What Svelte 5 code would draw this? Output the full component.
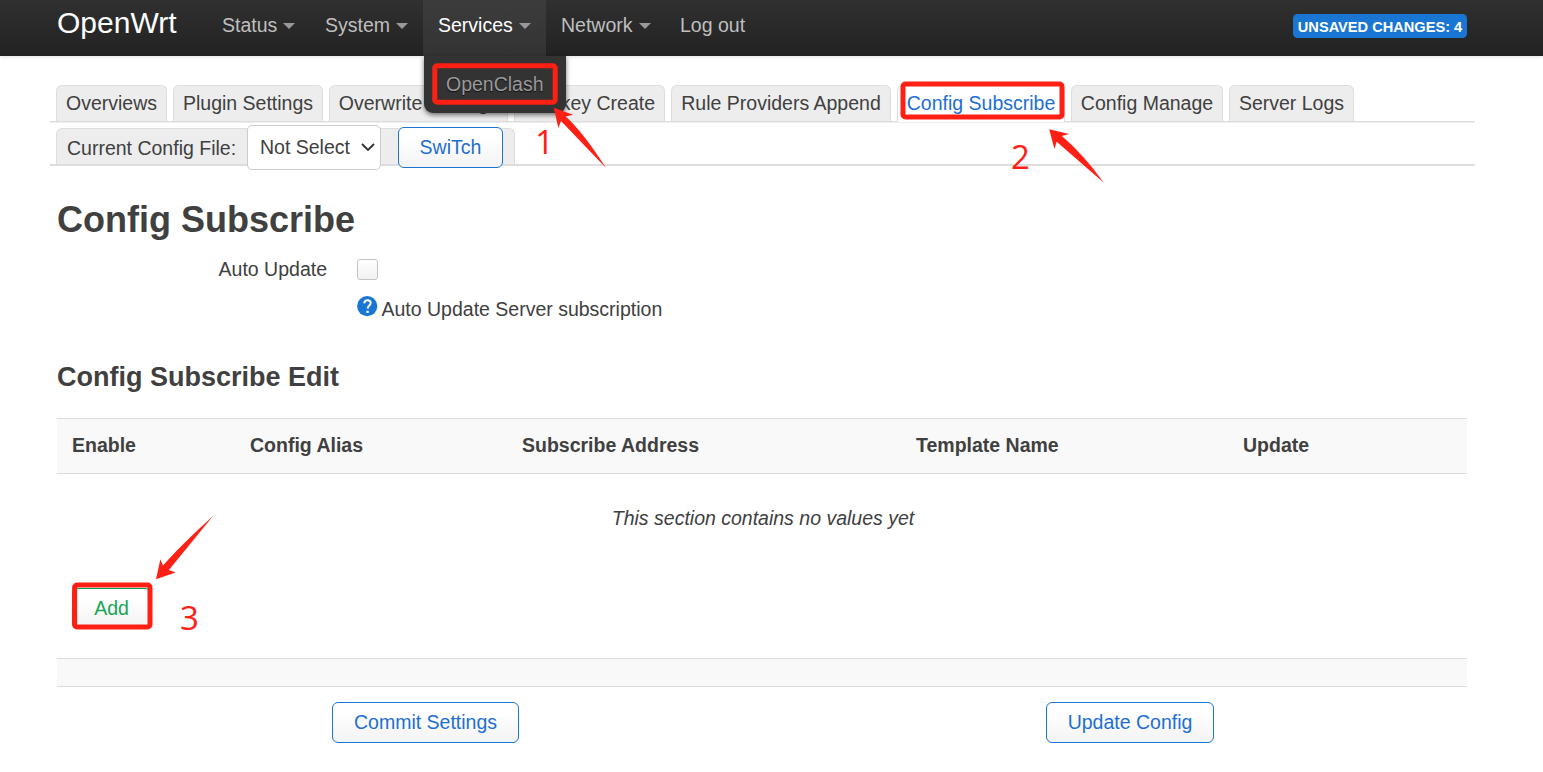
<script>
  const menus = [
    { label: 'Status', caret: true, w: 103 },
    { label: 'System', caret: true, w: 113 },
    { label: 'Services', caret: true, w: 123, open: true },
    { label: 'Network', caret: true, w: 119 },
    { label: 'Log out', caret: false, w: 95 }
  ];
  const tabs = [
    { label: 'Overviews', w: 111 },
    { label: 'Plugin Settings', w: 150 },
    { label: 'Overwrite Settings', w: 179 },
    { label: 'Onekey Create', w: 151 },
    { label: 'Rule Providers Append', w: 220 },
    { label: 'Config Subscribe', w: 168, active: true },
    { label: 'Config Manage', w: 152 },
    { label: 'Server Logs', w: 125 }
  ];
  const columns = ['Enable', 'Config Alias', 'Subscribe Address', 'Template Name', 'Update'];
</script>

<header>
  <a class="brand" href="#top">OpenWrt</a>
  <nav>
    {#each menus as m}
      <div class="menu" class:open={m.open} style:width="{m.w}px">
        <span>{m.label}</span>{#if m.caret}<i class="caret"></i>{/if}
        {#if m.open}<div class="dropdown"><span>OpenClash</span></div>{/if}
      </div>
    {/each}
  </nav>
  <span class="badge">UNSAVED CHANGES: 4</span>
</header>

<main>
  <div class="tabs">
    {#each tabs as t}
      <div class="tab" class:active={t.active} style:width="{t.w}px">{t.label}</div>
    {/each}
  </div>
  <div class="filebar">
    <div class="file">
      <span class="filelabel">Current Config File:</span>
      <div class="select">
        <span>Not Select</span>
        <svg width="16" height="10" viewBox="0 0 16 10"><path d="M2 2l6 6 6-6" fill="none" stroke="#333" stroke-width="1.9" /></svg>
      </div>
      <button class="switch">SwiTch</button>
    </div>
  </div>

  <h2>Config Subscribe</h2>
  <div class="option">
    <span class="optlabel">Auto Update</span>
    <div class="check"></div>
  </div>
  <div class="help">
    <svg width="21" height="21" viewBox="0 0 21 21">
      <circle cx="10.2" cy="10.2" r="10.1" fill="#1976d2" />
      <path d="M7.2 7.4C7.4 5.2 8.7 4.2 10.5 4.2c1.9 0 3.2 1.1 3.2 2.8 0 2.4-3 2.6-3.1 5.6" fill="none" stroke="#fff" stroke-width="1.9" />
      <rect x="9.4" y="14.8" width="2.3" height="2.2" fill="#fff" />
    </svg>
    <span>Auto Update Server subscription</span>
  </div>

  <h3>Config Subscribe Edit</h3>
  <div class="thead">
    {#each columns as c}<span>{c}</span>{/each}
  </div>
  <div class="empty"><em>This section contains no values yet</em></div>
  <div class="addrow"><button class="add">Add</button></div>
  <div class="strip"></div>
  <div class="actions">
    <button class="commit">Commit Settings</button>
    <button class="update">Update Config</button>
  </div>
</main>

<svg class="notes" width="1543" height="772" viewBox="0 0 1543 772">
  <g fill="none" stroke="#ff2015" stroke-width="5">
    <rect x="434.8" y="65.8" width="120.4" height="36.4" rx="2.5" />
    <rect x="903" y="84" width="159" height="33" rx="2.5" />
    <rect x="74.6" y="585" width="75.4" height="42" rx="2.5" />
  </g>
  <g fill="#ff2015">
    <path d="M553.7 107.7L573.2 114.7 565.7 116.5Q583 132 606 168L561 120.9 558.4 128Z" />
    <path d="M1049.2 129.2L1069 134 1061.9 136Q1084 155 1103.8 182.7L1056.7 141.7 1054.4 149Z" />
    <path d="M156 579.2L160.4 559.2 163 565.5Q181 545 213 516L168.9 570 175.5 572.4Z" />
    <text x="535" y="154">1</text>
    <text x="1011" y="169">2</text>
    <text x="180" y="630">3</text>
  </g>
</svg>

<style>
  :global(body) {
    background: #fff;
    color: #404040;
    font: 19.5px/27px "Liberation Sans", Arial, sans-serif;
    white-space: nowrap;
    overflow: hidden;
  }
  header {
    box-sizing: border-box;
    height: 56px;
    padding: 0 76px 0 57px;
    display: flex;
    align-items: flex-start;
    background: linear-gradient(#303030, #222);
    box-shadow: 0 1px 4px rgba(0, 0, 0, 0.12);
  }
  .brand {
    width: 150px;
    font-size: 30px;
    line-height: 46px;
    color: #fff;
    text-decoration: none;
  }
  nav { display: flex; flex: 1; }
  .menu {
    box-sizing: border-box;
    position: relative;
    height: 56px;
    padding: 12px 0 0 15px;
    color: #bfbfbf;
  }
  .menu.open { background: linear-gradient(#3c3c3c, #333); color: #fff; }
  .caret {
    display: inline-block;
    margin-left: 6px;
    vertical-align: 3px;
    border: 6px solid transparent;
    border-top-color: #999;
    border-bottom: 0;
  }
  .dropdown {
    box-sizing: border-box;
    position: absolute;
    z-index: 2;
    left: 1px;
    top: 56px;
    width: 142px;
    height: 57px;
    padding: 15px 0 0 22px;
    background: #333;
    border-radius: 0 0 9px 9px;
    box-shadow: 0 2px 5px rgba(0, 0, 0, 0.55);
    color: #999;
    text-shadow: 0 1px 1px #111;
  }
  .badge {
    box-sizing: border-box;
    margin-top: 14px;
    width: 174px;
    height: 24px;
    border-radius: 4.5px;
    background: #1976d2;
    color: #fff;
    font-size: 14.6px;
    font-weight: bold;
    line-height: 26px;
    text-align: center;
  }
  main { padding: 29px 0 0 57px; width: 1410px; }
  .tabs, .filebar {
    margin: 0 -8px 0 -7px;
    display: flex;
    padding-left: 6px;
  }
  .tabs { gap: 6px; height: 36px; border-bottom: 1px solid #ddd; box-shadow: 0 1px 0 #eee; }
  .tab {
    box-sizing: border-box;
    height: 36px;
    border: 1px solid #ddd;
    border-bottom: 0;
    border-radius: 6px 6px 0 0;
    background: #ededed;
    text-align: center;
    line-height: 35px;
  }
  .tab.active { background: #fff; color: #1e6fd2; height: 37px; }
  .filebar { height: 42px; border-bottom: 2px solid #ddd; align-items: flex-end; }
  .file {
    box-sizing: border-box;
    width: 459px;
    height: 36px;
    display: flex;
    align-items: center;
    border: 1px solid #ddd;
    border-bottom: 0;
    border-radius: 6px 6px 0 0;
    background: #ededed;
  }
  .filelabel { box-sizing: border-box; width: 190px; padding-left: 10px; margin-top: 3px; }
  .select {
    box-sizing: border-box;
    flex: none;
    width: 134px;
    height: 45px;
    margin-top: 2px;
    display: flex;
    align-items: center;
    justify-content: space-between;
    padding: 0 4px 1px 12px;
    border: 1px solid #ccc;
    border-radius: 5px;
    background: #fff;
  }
  button {
    box-sizing: border-box;
    height: 41px;
    border: 1px solid #1976d2;
    border-radius: 6px;
    background: linear-gradient(#fff 25%, #f3f3f3);
    color: #1e6fd2;
    font: inherit;
    padding: 0;
  }
  .switch { width: 105px; margin-left: 17px; margin-top: 1px; }
  h2 { margin: 27px 0 0; font-size: 36px; line-height: 54px; }
  .option { display: flex; margin-top: 9px; height: 27px; align-items: center; }
  .optlabel { width: 270px; text-align: right; margin-right: 30px; }
  .check {
    box-sizing: border-box;
    width: 21px;
    height: 21px;
    border: 1px solid #c4c4c4;
    border-radius: 3px;
    background: linear-gradient(#fff, #f1f1f1);
  }
  .help { display: flex; margin: 13px 0 0 300px; height: 27px; }
  .help span { margin-left: 3.5px; }
  h3 { margin: 27px 0 0; font-size: 27px; line-height: 54px; }
  .thead {
    box-sizing: border-box;
    margin-top: 14px;
    height: 56px;
    display: grid;
    grid-template-columns: 178px 272px 394px 327px 1fr;
    padding-left: 15px;
    border: 1px solid #ddd;
    border-width: 1px 0;
    background: #f9f9f9;
    font-weight: bold;
    line-height: 53px;
  }
  .empty { height: 90px; line-height: 89px; text-align: center; padding-left: 2px; }
  .addrow { height: 94px; padding: 24px 0 0 15px; box-sizing: border-box; }
  .add { width: 79px; border-color: #00a54f; color: #18a558; }
  .strip {
    box-sizing: border-box;
    height: 29px;
    border: 1px solid #ddd;
    border-width: 1px 0;
    background: #f9f9f9;
  }
  .actions { display: flex; padding: 15px 0 0 275px; }
  .commit { width: 187px; }
  .update { width: 168px; margin-left: 527px; }
  .notes { position: absolute; z-index: 5; left: 0; top: 0; pointer-events: none; }
  .notes text { font: 33px "Open Sans", "Noto Sans", sans-serif; }
</style>
